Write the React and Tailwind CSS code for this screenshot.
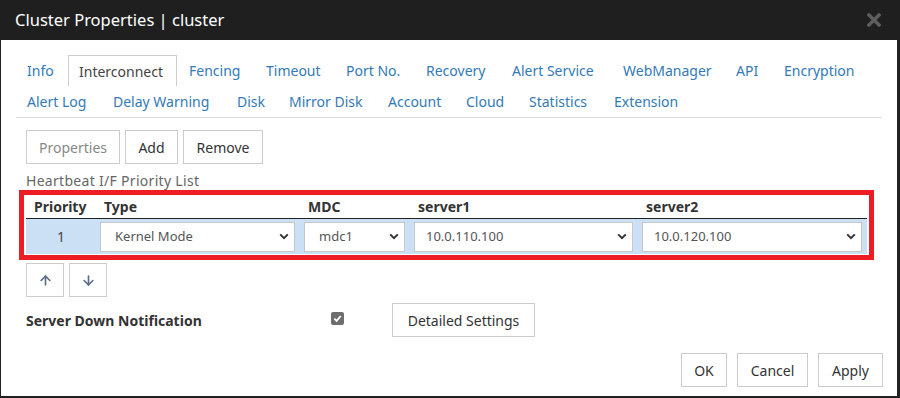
import { ArrowUp, ArrowDown } from 'lucide-react'

const ROW1 = [
  ['Info', 52],
  ['Interconnect', 110, true],
  ['Fencing', 77],
  ['Timeout', 80],
  ['Port No.', 80],
  ['Recovery', 86],
  ['Alert Service', 111],
  ['WebManager', 113],
  ['API', 48],
  ['Encryption', 98],
]

const ROW2 = [
  ['Alert Log', 86],
  ['Delay Warning', 124],
  ['Disk', 52],
  ['Mirror Disk', 99],
  ['Account', 78],
  ['Cloud', 63],
  ['Statistics', 85],
  ['Extension', 90],
]

export default function App() {
  return (
    <div className="w-[900px] h-[398px] bg-white font-['Noto_Sans',sans-serif] text-[14px] text-[#333] flex flex-col overflow-hidden">
      {/* Title bar */}
      <div className="h-10 shrink-0 bg-[#1f1f1f] flex items-center justify-between pl-[15px] pr-[19px]">
        <span className="text-white text-[16.5px]">Cluster Properties | cluster</span>
        <CloseIcon />
      </div>

      <div className="flex-1 flex flex-col border-l border-b-2 border-r-[3px] border-[#222]">
        {/* Tabs */}
        <div className="mx-[15px] mt-[15px] border-b border-[#ddd]">
          <TabRow tabs={ROW1} />
          <TabRow tabs={ROW2} />
        </div>

        <div className="pl-[25px] pr-[14px]">
          {/* Toolbar */}
          <div className="flex gap-[5px] mt-[12px]">
            <Btn w="w-[94px]" muted>Properties</Btn>
            <Btn w="w-[53px]">Add</Btn>
            <Btn w="w-[80px]">Remove</Btn>
          </div>

          <div className="text-[#666] mt-[8px] leading-[18px] tracking-[0.3px]">Heartbeat I/F Priority List</div>

          {/* Priority list */}
          <div className="-ml-[7px] w-[855px] border-[5px] border-[#ee1c25] px-[2px] pb-[1px]">
            <div className="grid grid-cols-[70px_204px_109px_228px_229px] font-bold h-[24px] items-center border-b border-[#222]">
              <div className="pl-[8px]">Priority</div>
              <div className="pl-[8px]">Type</div>
              <div className="pl-[8px]">MDC</div>
              <div className="pl-[9px]">server1</div>
              <div className="pl-[9px]">server2</div>
            </div>
            <div className="grid grid-cols-[70px_204px_109px_228px_229px] h-[35px] items-center bg-[#cbe0f4]">
              <div className="text-center text-[#444]">1</div>
              <div className="pl-[4px] pr-[5px]"><Select text="Kernel Mode" pad="pl-[14px]" /></div>
              <div className="pl-[4px] pr-[4px]"><Select text="mdc1" pad="pl-[14px]" /></div>
              <div className="pl-[5px] pr-[4px]"><Select text="10.0.110.100" pad="pl-[11px]" /></div>
              <div className="pl-[5px] pr-[4px]"><Select text="10.0.120.100" pad="pl-[11px]" /></div>
            </div>
          </div>

          {/* Move buttons */}
          <div className="flex gap-[5px] mt-[3px]">
            <Btn w="w-[38px]"><ArrowUp size={15} strokeWidth={2.6} className="text-[#5b6f84]" /></Btn>
            <Btn w="w-[38px]"><ArrowDown size={15} strokeWidth={2.6} className="text-[#5b6f84]" /></Btn>
          </div>

          {/* Server down notification */}
          <div className="flex items-center mt-[6px]">
            <span className="w-[305px] font-bold text-[#333]">Server Down Notification</span>
            <span className="w-[13px] h-[13px] rounded-[2px] bg-[#6e6e6e] flex items-center justify-center mb-[4px]">
              <svg width="9" height="9" viewBox="0 0 10 10">
                <path d="M1.5 5.2 L4 7.6 L8.6 2.2" fill="none" stroke="white" strokeWidth="2" />
              </svg>
            </span>
            <span className="ml-[48px]">
              <Btn w="w-[143px]">Detailed Settings</Btn>
            </span>
          </div>

          {/* Footer */}
          <div className="flex justify-end gap-[10px] mt-[16px]">
            <Btn w="w-[46px]">OK</Btn>
            <Btn w="w-[71px]">Cancel</Btn>
            <Btn w="w-[65px]">Apply</Btn>
          </div>
        </div>
      </div>
    </div>
  )
}

function TabRow({ tabs }) {
  return (
    <div className="flex h-[31px]">
      {tabs.map(([label, w, active]) => (
        <div
          key={label}
          className={
            active
              ? 'w-[109px] mr-[1px] pl-[10px] border border-b-0 border-[#ccc] text-[#444] flex items-center'
              : 'pl-[11px] text-[#337ab7] flex items-center'
          }
          style={active ? undefined : { width: w }}
        >
          {label}
        </div>
      ))}
    </div>
  )
}

function Btn({ children, w, muted }) {
  return (
    <div
      className={`${w} h-[34px] shrink-0 border border-[#ccc] bg-white flex items-center justify-center ${
        muted ? 'text-[#888]' : 'text-[#333]'
      }`}
    >
      {children}
    </div>
  )
}

function Select({ text, pad }) {
  return (
    <div className={`h-[30px] bg-white border border-[#c8c8c8] flex items-center justify-between ${pad} pr-[5px] text-[13px] text-[#555]`}>
      <span>{text}</span>
      <svg width="10" height="7" viewBox="0 0 10 7">
        <path d="M1.2 1.4 L5 5.2 L8.8 1.4" fill="none" stroke="#333" strokeWidth="2" />
      </svg>
    </div>
  )
}

function CloseIcon() {
  return (
    <svg width="14" height="14" viewBox="0 0 14 14">
      <path d="M2 2 L12 12 M12 2 L2 12" stroke="#5e5e5e" strokeWidth="3.4" strokeLinecap="square" />
    </svg>
  )
}
